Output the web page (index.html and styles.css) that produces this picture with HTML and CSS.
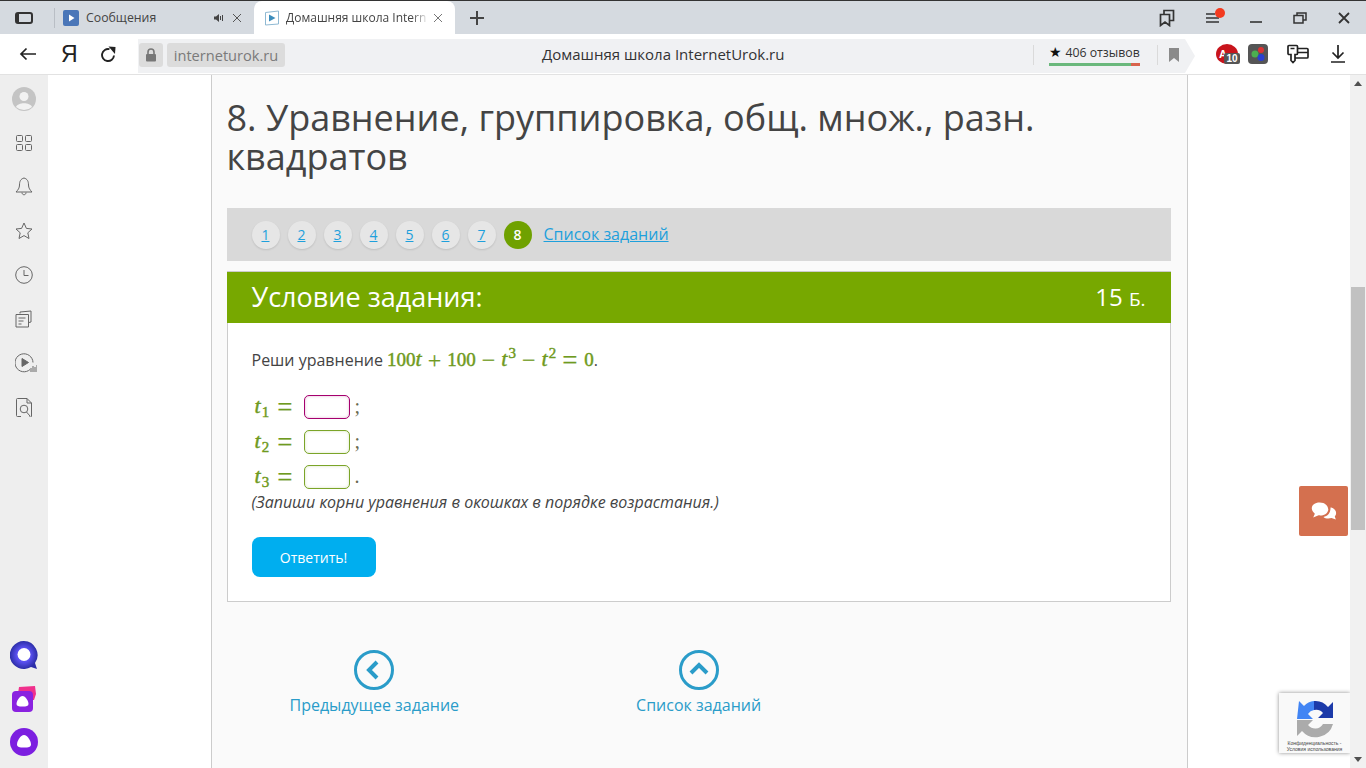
FILE: index.html
```html
<!DOCTYPE html>
<html lang="ru">
<head>
<meta charset="utf-8">
<title>Домашняя школа InternetUrok.ru</title>
<link rel="stylesheet" href="styles.css">
</head>
<body>
<div class="app">
  <header class="tabbar">
    <svg class="tb-panel" width="18" height="12" viewBox="0 0 18 12"><rect x="1" y="1" width="16" height="10" rx="2" fill="none" stroke="#333" stroke-width="2"/><rect x="1" y="1" width="3" height="10" fill="#333"/></svg>
    <span class="tab-sep"></span>
    <div class="tab">
      <svg class="fav" width="16" height="16" viewBox="0 0 16 16"><rect width="16" height="16" rx="2" fill="#4a76b8"/><path d="M6 4.500v7l5.500-3.500z" fill="#fff"/></svg>
      <span class="tab-title">Сообщения</span>
      <svg class="tab-sound" width="10" height="10" viewBox="0 0 10 10"><path d="M0 3.500h2L5 1v8L2 6.500H0z" fill="#444"/><path d="M6.500 3v4M8.500 2v6" stroke="#444" stroke-width="1"/></svg>
      <svg class="tab-x" width="10" height="10" viewBox="0 0 10 10"><path d="M1 1l8 8M9 1l-8 8" stroke="#555" stroke-width="1"/></svg>
    </div>
    <div class="tab active">
      <svg class="fav" width="14" height="16" viewBox="0 0 14 16"><path d="M.5 2.500L13.500 1v13L.5 15z" fill="#fff" stroke="#8fb9d3"/><path d="M4 4.500v7l6.500-3.500z" fill="#3c8dbc"/></svg>
      <span class="tab-title clip">Домашняя школа Intern</span>
      <svg class="tab-x" width="10" height="10" viewBox="0 0 10 10"><path d="M1 1l8 8M9 1l-8 8" stroke="#777" stroke-width="1"/></svg>
    </div>
    <svg class="plus" width="16" height="16" viewBox="0 0 16 16"><path d="M8 1v14M1 8h14" stroke="#444" stroke-width="2"/></svg>
    <div class="win">
      <svg class="w-btn" width="16" height="18" viewBox="0 0 16 18"><path d="M1.500 5.500h9v11l-4.500-3.500-4.500 3.500zM5 5V1.500h9.500v10H11" fill="none" stroke="#333" stroke-width="1.700"/></svg>
      <span class="w-menu"><svg width="16" height="10" viewBox="0 0 16 10"><path d="M0 1h9M0 5h13M0 9h13" stroke="#333" stroke-width="1.500"/></svg><i class="dot"></i></span>
      <svg class="w-btn" width="12" height="12" viewBox="0 0 12 12"><path d="M0 10h12" stroke="#333" stroke-width="1.600"/></svg>
      <svg class="w-btn" width="14" height="12" viewBox="0 0 14 12"><path d="M1 3.500h9v7.500H1zM4 3.500V1h9v7h-3" fill="none" stroke="#333" stroke-width="1.500"/></svg>
      <svg class="w-btn" width="12" height="12" viewBox="0 0 12 12"><path d="M1 1l10 10M11 1L1 11" stroke="#333" stroke-width="1.800"/></svg>
    </div>
  </header>

  <nav class="toolbar">
    <svg class="tool" width="18" height="14" viewBox="0 0 18 14"><path d="M17 7H2M7.500 1.500L2 7l5.500 5.500" fill="none" stroke="#222" stroke-width="1.700"/></svg>
    <span class="ya">Я</span>
    <svg class="tool reload" width="16" height="16" viewBox="0 0 16 16"><path d="M9.500 3.200A6 6 0 1 0 14 9.500" fill="none" stroke="#222" stroke-width="1.900"/><path d="M8.500.5l7 .5-.5 7z" fill="#222"/></svg>
    <div class="address">
      <span class="lock"><svg width="12" height="14" viewBox="0 0 12 14"><path d="M3 6V4a3 3 0 0 1 6 0v2" fill="none" stroke="#777" stroke-width="1.600"/><rect x="1" y="6" width="10" height="7.500" rx="1" fill="#777"/></svg></span>
      <span class="url">interneturok.ru</span>
      <span class="page-title">Домашняя школа InternetUrok.ru</span>
      <span class="a-sep first"></span>
      <span class="rating"><span class="rating-text"><b>★</b> 406 отзывов</span><i class="rating-bar"></i></span>
      <span class="a-sep"></span>
      <svg class="a-mark" width="10" height="14" viewBox="0 0 10 14"><path d="M0 0h10v14L5 10 0 14z" fill="#8a8a8a"/></svg>
    </div>
    <div class="exts">
      <span class="ext-ab"><i class="ab-stop">A</i><i class="ab-num">10</i></span>
      <svg class="ext-col" width="20" height="20" viewBox="0 0 20 20"><rect width="20" height="20" rx="4" fill="#555"/><circle cx="7" cy="10" r="3.500" fill="#4caf50"/><circle cx="13" cy="6" r="3" fill="#d33"/><circle cx="13" cy="13.500" r="3.500" fill="#2a3fd0"/></svg>
      <svg class="ext-key" width="22" height="20" viewBox="0 0 22 20"><path d="M2 1.500h7.500a1 1 0 0 1 1 1v7a1 1 0 0 1-1 1H8v6l-2 2-2-2v-6H2a1 1 0 0 1-1-1v-7a1 1 0 0 1 1-1zM10.500 4.500H20a1 1 0 0 1 1 1V13a1 1 0 0 1-1 1H8M10.500 8.500H21M3.500 4.500h4" fill="none" stroke="#222" stroke-width="1.700"/></svg>
      <svg class="ext-dl" width="14" height="18" viewBox="0 0 14 18"><path d="M7 0v13M1.500 7.500L7 13l5.500-5.500M0 17h14" fill="none" stroke="#222" stroke-width="1.700"/></svg>
    </div>
  </nav>

  <div class="body">
    <aside class="side">
      <div class="side-top">
        <svg width="24" height="24" viewBox="0 0 24 24"><circle cx="12" cy="12" r="12" fill="#c4c4c4"/><circle cx="12" cy="9.500" r="4.500" fill="#f2f2f2"/><path d="M4 20c2-5 14-5 16 0a12 12 0 0 1-16 0z" fill="#f2f2f2"/></svg>
        <svg width="16" height="16" viewBox="0 0 16 16" class="si"><rect x=".5" y=".5" width="6" height="6" rx="1"/><rect x="9.500" y=".5" width="6" height="6" rx="1"/><rect x=".5" y="9.500" width="6" height="6" rx="1"/><rect x="9.500" y="9.500" width="6" height="6" rx="1"/></svg>
        <svg width="18" height="20" viewBox="0 0 18 20" class="si"><path d="M9 1c-3.500 1-4.500 3.500-4.500 7 0 3-1.500 5-3.500 7h16c-2-2-3.500-4-3.500-7 0-3.500-1-6-4.500-7zM7 15.500c0 3 4 3 4 0"/></svg>
        <svg width="18" height="18" viewBox="0 0 18 18" class="si"><path d="M9 1l2.400 5.400 5.600.6-4.200 3.800 1.200 5.700L9 13.600 4 16.500l1.200-5.700L1 7l5.600-.6z"/></svg>
        <svg width="18" height="18" viewBox="0 0 18 18" class="si"><circle cx="9" cy="9" r="8.300"/><path d="M9 4v5.500h4.500"/></svg>
        <svg width="18" height="18" viewBox="0 0 18 18" class="si"><path d="M5 3.500V2l11-1v11l-2 .5M1 4.500h12.500v12.500H1zM3.500 8h7M3.500 11h5M3.500 14h3"/></svg>
        <svg width="22" height="20" viewBox="0 0 22 20" class="si play"><path d="M15 16.500A9 9 0 1 1 18 9.500"/><path d="M7 5.500v8l6.500-4z" fill="#666"/><path d="M16 19v-4M18 19v-6M20 19v-5M22 19v-7"/></svg>
        <svg width="16" height="19" viewBox="0 0 16 19" class="si"><path d="M5 18.500H1.500a1 1 0 0 1-1-1v-16a1 1 0 0 1 1-1H11l4.500 4.500v13a1 1 0 0 1-1 1H13M11 .5V5h4.500"/><circle cx="8" cy="11" r="3.800"/><path d="M10.500 14l3.500 4"/></svg>
      </div>
      <div class="side-bottom">
        <svg width="28" height="28" viewBox="0 0 28 28"><defs><radialGradient id="g1"><stop offset=".5" stop-color="#5a50f0"/><stop offset="1" stop-color="#2c2ea8"/></radialGradient></defs><path d="M14 0a14 14 0 1 0 7 26l6 2-2-6A14 14 0 0 0 14 0z" fill="url(#g1)"/><circle cx="14" cy="13.500" r="6.500" fill="#fff"/></svg>
        <svg width="26" height="28" viewBox="0 0 26 28"><path d="M8 2l16-1 1 8-2 6H6z" fill="#f0308c"/><rect x="1" y="6" width="21" height="21" rx="4" fill="#8a22e0"/><path d="M11.500 11c3 0 6 5 6 8 0 2-2 2.500-6 2.500S5.500 21 5.500 19c0-3 3-8 6-8z" fill="#fff"/></svg>
        <svg width="28" height="28" viewBox="0 0 28 28"><circle cx="14" cy="14" r="14" fill="#7c1fe0"/><path d="M14 7c3.500 0 7 6 7 9.500 0 2.500-2.500 3-7 3s-7-.5-7-3C7 13 10.500 7 14 7z" fill="#fff"/></svg>
      </div>
    </aside>

    <main class="page">
      <article class="card">
        <h1 class="heading">8. Уравнение, группировка, общ. множ., разн. квадратов</h1>
        <div class="pager">
          <a class="pg">1</a><a class="pg">2</a><a class="pg">3</a><a class="pg">4</a><a class="pg">5</a><a class="pg">6</a><a class="pg">7</a><span class="pg current">8</span>
          <a class="pager-link">Список заданий</a>
        </div>
        <section class="task">
          <div class="task-head"><span class="task-title">Условие задания:</span><span class="score">15 <small>Б.</small></span></div>
          <div class="task-body">
            <p class="statement">Реши уравнение <span class="math eq">100<em>t</em><span class="op">+</span>100<span class="op">−</span><em>t</em><sup>3</sup><span class="op">−</span><em>t</em><sup>2</sup><span class="op eqs">=</span>0</span>.</p>
            <div class="ans"><span class="math lbl"><em>t</em><sub>1</sub><span class="op eqs">=</span></span><span class="box wrong"></span><span class="punct">;</span></div>
            <div class="ans"><span class="math lbl"><em>t</em><sub>2</sub><span class="op eqs">=</span></span><span class="box"></span><span class="punct">;</span></div>
            <div class="ans"><span class="math lbl"><em>t</em><sub>3</sub><span class="op eqs">=</span></span><span class="box"></span><span class="punct">.</span></div>
            <p class="hint">(Запиши корни уравнения в окошках в порядке возрастания.)</p>
            <button class="submit">Ответить!</button>
          </div>
        </section>
        <div class="bottom-nav">
          <a class="nav-item">
            <svg width="40" height="40" viewBox="0 0 40 40"><circle cx="20" cy="20" r="18.500" fill="none" stroke="#2a9cc9" stroke-width="3"/><path d="M23 12l-8 8 8 8" fill="none" stroke="#2a9cc9" stroke-width="4"/></svg>
            <span>Предыдущее задание</span>
          </a>
          <a class="nav-item">
            <svg width="40" height="40" viewBox="0 0 40 40"><circle cx="20" cy="20" r="18.500" fill="none" stroke="#2a9cc9" stroke-width="3"/><path d="M12 23l8-8 8 8" fill="none" stroke="#2a9cc9" stroke-width="4"/></svg>
            <span>Список заданий</span>
          </a>
        </div>
      </article>
      <button class="chat"><svg width="28" height="22" viewBox="0 0 26 20"><path d="M17 9c-1 4-5 5.500-9 5l-5 2 1.500-3.500C-1 8 2 2 9 2c5 0 8 3 8 7z" fill="#fff"/><path d="M19 6.500c4 1 6 4 5 7l-1 1.500 1 3-4-1.500-3 .5c-2 0-3.500-.5-4.500-1.500 4-.5 7-4 6.500-9.500z" fill="#fff"/></svg></button>
      <div class="recaptcha">
        <svg width="38" height="38" viewBox="0 0 38 38"><path d="M18 1A16 16 0 0 1 32 7l5-5v16H22l5-5a9 9 0 0 0-9-3z" fill="#1c3aa9"/><path d="M3 1l5 5A16 16 0 0 1 18 1v9a9 9 0 0 0-6 4l5 5H1z" fill="#4285f4"/><path d="M1 20h16l-5 5a9 9 0 0 0 15-1h10A18 18 0 0 1 6 31l-5 5z" fill="#ababab"/></svg>
        <span class="rc-text">Конфиденциальность -<br>Условия использования</span>
      </div>
    </main>

    <div class="scroll">
      <svg width="8" height="5" viewBox="0 0 8 5"><path d="M4 0l4 5H0z" fill="#505050"/></svg>
      <i class="thumb"></i>
      <svg width="8" height="5" viewBox="0 0 8 5"><path d="M0 0h8L4 5z" fill="#505050"/></svg>
    </div>
  </div>
</div>
</body>
</html>
```
FILE: styles.css
```css
* { box-sizing: border-box; }
html, body { margin: 0; height: 100%; overflow: hidden; }
body { font-family: "Open Sans", "Noto Sans", sans-serif; color: #444; background: #fff; }
.app { width: 1366px; height: 768px; display: flex; flex-direction: column; }

.tabbar { height: 34px; flex: none; display: flex; align-items: center; background: #d5dae0; border-top: 1px solid #333; padding-left: 15px; font-size: 12.300px; color: #444; }
.tb-panel { flex: none; }
.tab-sep { width: 1px; height: 20px; background: #b9bec5; margin: 0 0 0 21px; }
.tab { height: 33px; display: flex; align-items: center; flex: none; position: relative; }
.tab:nth-of-type(1) { width: 199px; padding-left: 8px; }
.tab.active { width: 201px; background: #fff; border-radius: 8px 8px 0 0; padding-left: 11px; }
.fav { flex: none; margin-right: 7px; }
.tab-title { white-space: nowrap; flex: 1; overflow: hidden; }
.tab-title.clip { color: #444; font-size: 12px; -webkit-mask-image: linear-gradient(90deg, #000 88%, transparent); mask-image: linear-gradient(90deg, #000 88%, transparent); }
.tab-sound { margin-right: 8px; flex: none; }
.tab-x { margin-right: 12px; flex: none; }
.tab.active .tab-x { margin-left: 4px; margin-right: 12px; }
.plus { margin-left: 14px; flex: none; }
.win { margin-left: auto; display: flex; align-items: center; }
.win .w-btn { flex: none; }
.win .w-btn:nth-child(1) { margin-right: 31px; }
.w-menu { position: relative; width: 16px; height: 10px; display: block; margin-right: 28px; line-height: 0; }
.w-menu .dot { position: absolute; left: 9px; top: -5px; width: 10px; height: 10px; border-radius: 50%; background: #f33a1f; }
.win .w-btn:nth-child(3) { margin-right: 31px; }
.win .w-btn:nth-child(4) { margin-right: 31px; }
.win .w-btn:nth-child(5) { margin-right: 16px; }

.toolbar { height: 41px; flex: none; display: flex; align-items: center; background: #fff; border-bottom: 1px solid #e2e2e2; padding-left: 19px; }
.tool { flex: none; }
.ya { width: 14px; margin-left: 24px; font-size: 23px; line-height: 24px; color: #222; font-family: "Liberation Sans", sans-serif; text-align: center; flex: none; }
.reload { margin-left: 25px; }
.address { margin: 4px 0 0 22px; width: 1047px; height: 34px; flex: none; display: flex; align-items: center; background: #f0f1f3; position: relative; padding: 0 6px 3px 1px; font-size: 14.500px; }
.address::after { content: ""; position: absolute; left: 100%; top: 0; border-style: solid; border-width: 17px 0 17px 10px; border-color: transparent transparent transparent #f0f1f3; }
.lock { width: 24px; height: 24px; background: #dcdcdc; border-radius: 3px; display: flex; align-items: center; justify-content: center; flex: none; }
.url { margin-left: 4px; width: 118px; height: 24px; background: #dcdcdc; border-radius: 3px; color: #7a7a7a; text-align: center; line-height: 24px; flex: none; font-size: 14.600px; }
.page-title { position: absolute; left: 404px; top: 0; line-height: 31px; font-size: 15px; color: #333; white-space: nowrap; }
.a-sep { width: 1px; height: 20px; background: #dadada; flex: none; }
.a-sep.first { margin-left: auto; }
.rating { width: 91px; margin: 0 17px 0 15px; flex: none; display: flex; flex-direction: column; align-items: center; font-size: 12.300px; color: #333; }
.rating-text { line-height: 16px; white-space: nowrap; }
.rating-text b { font-size: 14px; color: #111; font-weight: 400; }
.rating-bar { display: block; width: 91px; height: 3px; margin-top: 2px; background: linear-gradient(90deg, #6ab87c 0 90%, #d8634c 90%); }
.a-mark { margin-left: 11px; flex: none; }
.exts { display: flex; align-items: center; margin-left: 31px; }
.ext-ab { position: relative; width: 24px; height: 20px; display: block; flex: none; }
.ab-stop { position: absolute; left: 0; top: 0; width: 22px; height: 20px; border-radius: 50%; background: #c8141c; color: #fff; font: 700 11px/20px "Liberation Sans", sans-serif; padding-left: 3px; }
.ab-num { position: absolute; left: 8px; top: 9px; width: 16px; height: 11px; background: #555; border-radius: 2px; color: #fff; font: 700 10px/11px "Liberation Sans", sans-serif; text-align: center; }
.ext-col { margin-left: 8px; flex: none; }
.ext-key { margin-left: 19px; flex: none; }
.ext-dl { margin-left: 22px; flex: none; }

.body { flex: 1; display: flex; min-height: 0; }
.side { width: 48px; flex: none; background: #eee; display: flex; flex-direction: column; justify-content: space-between; align-items: center; padding: 2px 0 4px; }
.side-top { display: grid; grid-auto-rows: 44px; place-items: center; }
.side-top svg { display: block; }
.side-top .play { margin-left: 3px; }
.si { fill: none; stroke: #666; stroke-width: 1; }
.side-bottom { display: grid; grid-auto-rows: 43.500px; place-items: center; }
.side-bottom svg { display: block; }

.page { flex: 1; position: relative; overflow: hidden; background: #fff; display: flex; justify-content: center; align-items: flex-start; }
.card { width: 977px; min-height: 100%; background: #fafafa; border-left: 1px solid #ccc; border-right: 1px solid #ccc; padding: 23px 16px 0 15px; flex: none; }
.heading { margin: 0 0 32px; font-weight: 400; font-size: 36px; line-height: 39px; color: #444; }
.pager { height: 53px; background: #d9d9d9; display: flex; align-items: center; padding-left: 25px; gap: 8px; }
.pg { width: 28px; height: 28px; border-radius: 50%; background: #e6e6e6; color: #1ea0dc; text-decoration: underline; text-align: center; font-size: 14px; line-height: 27px; flex: none; box-shadow: 0 1px 2px rgba(0,0,0,.12); }
.pg.current { background: #6fa100; color: #fff; text-decoration: none; font-weight: 600; box-shadow: none; }
.pager-link { color: #1ea0dc; text-decoration: underline; font-size: 16px; line-height: 20px; margin: -2px 0 0 4px; }
.task { margin-top: 10px; border: 1px solid #ccc; background: #fff; }
.task-head { height: 51px; margin: 0 -1px; background: #77a800; color: #fff; display: flex; justify-content: space-between; align-items: center; padding: 0 25px 2px; font-size: 24px; font-weight: 400; }
.task-title { font-size: 27px; }
.task-head small { font-size: 19px; }
.task-body { height: 278px; padding: 21px 24px 0; font-size: 16px; }
.statement { margin: 0 0 13px; line-height: 32px; height: 32px; white-space: nowrap; }
.math { font-family: "Liberation Serif", serif; font-weight: 400; -webkit-text-stroke: .45px #6f9a20; color: #6f9a20; font-size: 19px; }
.math em { font-style: italic; font-size: 22px; line-height: 0; }
.math sup { font-size: 15px; line-height: 0; vertical-align: 8px; margin-left: 1px; }
.math sub { font-size: 15px; line-height: 0; vertical-align: -4px; margin-left: 1px; }
.op { font-size: 24px; line-height: 0; vertical-align: -2px; margin: 0 6px; -webkit-text-stroke: .2px #6f9a20; }
.op.eqs { font-size: 27px; vertical-align: -3px; margin: 0 7px 0 6px; }
.ans { height: 35px; display: flex; align-items: center; padding-left: 3px; }
.lbl { width: 49px; flex: none; white-space: nowrap; }
.lbl .op.eqs { margin-left: 8px; }
.box { width: 46px; height: 24px; border: 1px solid #7ba428; border-radius: 5px; background: #fff; box-shadow: inset 0 0 3px rgba(120,160,40,.3); flex: none; }
.box.wrong { border-color: #a5006e; box-shadow: inset 0 0 3px rgba(165,0,110,.3); }
.punct { margin-left: 5px; font-family: "Liberation Serif", serif; font-size: 20px; color: #6a6a50; }
.hint { margin: -3px 0 0; font-style: italic; line-height: 22px; font-size: 16px; color: #444; white-space: nowrap; }
.submit { display: block; margin-top: 24px; width: 124px; height: 40px; border: 0; border-radius: 8px; background: #00aeef; color: #fff; font: 400 14px "Open Sans", sans-serif; }
.bottom-nav { display: flex; padding-left: 63px; margin-top: 48px; gap: 177px; }
.nav-item { display: flex; flex-direction: column; align-items: center; gap: 4px; color: #2a9cc9; font-size: 16px; }
.nav-item svg { display: block; }
.chat { position: absolute; left: 1251px; top: 411px; width: 49px; height: 50px; border: 0; padding: 0; background: #d4704f; border-radius: 2px; display: flex; align-items: center; justify-content: center; }
.recaptcha { position: absolute; left: 1231px; top: 618px; width: 71px; height: 60px; background: #f9f9f9; box-shadow: 0 0 4px rgba(0,0,0,.45); display: flex; flex-direction: column; align-items: center; padding-top: 7px; overflow: hidden; }
.rc-text { font: 5px/6px "Liberation Sans", sans-serif; color: #444; text-align: center; white-space: nowrap; margin-top: 2px; }

.scroll { width: 16px; flex: none; background: #f1f1f1; display: flex; flex-direction: column; align-items: center; padding: 6px 0 6px; }
.scroll .thumb { display: block; width: 14px; height: 243px; background: #c1c1c1; margin: 201px 0 auto; }
```
